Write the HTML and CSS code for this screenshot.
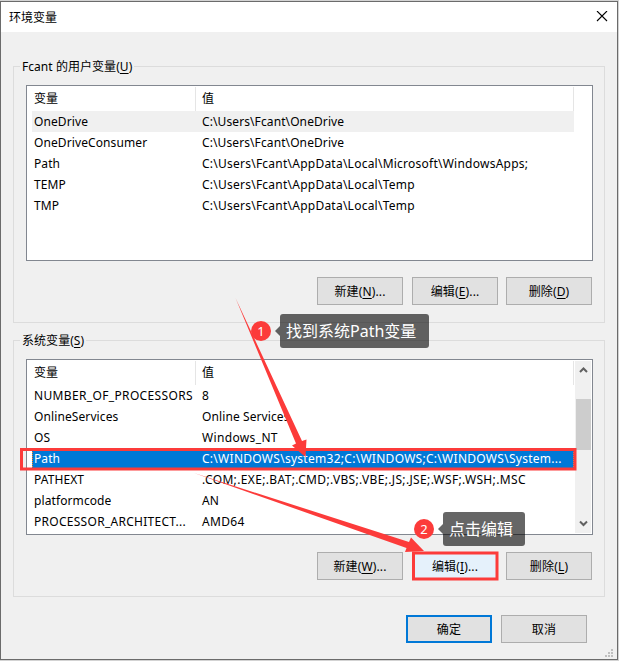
FILE: index.html
```
<!DOCTYPE html>
<html lang="zh-CN">

<head>
  <meta charset="UTF-8" />
  <meta name="viewport" content="width=device-width, initial-scale=1.0" />
  <title>环境变量</title>
  <link rel="stylesheet" href="styles.css">
</head>

<body>
  <div class="window">
    <header class="titlebar">
      <span>环境变量</span>
      <svg class="close" width="12" height="12" viewBox="0 0 12 12">
        <path d="M1 0L11 10M11 0L1 10" />
      </svg>
    </header>

    <main class="content">
      <section class="group user">
        <h2>Fcant 的用户变量(<u>U</u>)</h2>
        <div class="list">
          <div class="rows">
            <div class="row head"><span>变量</span><span>值</span></div>
            <div class="row current"><span>OneDrive</span><span>C:\Users\Fcant\OneDrive</span></div>
            <div class="row"><span>OneDriveConsumer</span><span>C:\Users\Fcant\OneDrive</span></div>
            <div class="row"><span>Path</span><span class="long">C:\Users\Fcant\AppData\Local\Microsoft\WindowsApps;</span></div>
            <div class="row"><span>TEMP</span><span class="long">C:\Users\Fcant\AppData\Local\Temp</span></div>
            <div class="row"><span>TMP</span><span class="long">C:\Users\Fcant\AppData\Local\Temp</span></div>
          </div>
        </div>
        <div class="buttons">
          <button>新建(<u>N</u>)...</button>
          <button>编辑(<u>E</u>)...</button>
          <button>删除(<u>D</u>)</button>
        </div>
      </section>

      <section class="group system">
        <h2>系统变量(<u>S</u>)</h2>
        <div class="list">
          <div class="rows">
            <div class="row head"><span>变量</span><span>值</span></div>
            <div class="row"><span class="caps">NUMBER_OF_PROCESSORS</span><span>8</span></div>
            <div class="row"><span>OnlineServices</span><span>Online Services</span></div>
            <div class="row"><span>OS</span><span class="caps">Windows_NT</span></div>
            <div class="row selected"><span>Path</span><span class="path">C:\WINDOWS\system32;C:\WINDOWS;C:\WINDOWS\System...</span></div>
            <div class="row"><span>PATHEXT</span><span class="caps">.COM;.EXE;.BAT;.CMD;.VBS;.VBE;.JS;.JSE;.WSF;.WSH;.MSC</span></div>
            <div class="row"><span>platformcode</span><span>AN</span></div>
            <div class="row"><span class="path">PROCESSOR_ARCHITECT...</span><span class="caps">AMD64</span></div>
          </div>
          <div class="scrollbar">
            <svg width="9" height="7" viewBox="0 0 9 7"><path d="M1 5L4.500 1.500L8 5" /></svg>
            <div class="thumb"></div>
            <svg width="9" height="7" viewBox="0 0 9 7"><path d="M1 1.500L4.500 5L8 1.500" /></svg>
          </div>
        </div>
        <div class="buttons">
          <button>新建(<u>W</u>)...</button>
          <button class="hover">编辑(<u>I</u>)...</button>
          <button>删除(<u>L</u>)</button>
        </div>
      </section>

      <footer class="actions">
        <button class="default">确定</button>
        <button>取消</button>
      </footer>
    </main>
    <svg class="grip" width="9" height="9" viewBox="0 0 9 9">
      <path d="M6 0h2v2h-2zM3 3h2v2h-2zM6 3h2v2h-2zM0 6h2v2h-2zM3 6h2v2h-2zM6 6h2v2h-2z" />
    </svg>
  </div>

  <!-- annotations -->
  <svg class="arrows" width="619" height="661" viewBox="0 0 619 661">
    <rect x="21.500" y="449.500" width="553.500" height="19.500" />
    <rect x="413.500" y="553" width="83.500" height="26" />
    <path d="M235.500 298L302 441L306.500 439.500L305.500 457L292 445.500L296 443.500Z" />
    <path d="M194 473L409 542L411 537.500L424 551L405 552L406.500 548Z" />
  </svg>
  <div class="badge one">1</div>
  <div class="tip find">找到系统Path变量</div>
  <div class="badge two">2</div>
  <div class="tip edit">点击编辑</div>
</body>

</html>
```
FILE: styles.css
```
* {
  box-sizing: border-box;
}

body {
  margin: 0;
  padding: 1px 10px 1px 0;
  height: 661px;
  overflow: hidden;
  background: #d3d3d3;
  color: #000;
  font-family: "Noto Sans", "Noto Sans CJK SC", sans-serif;
  font-size: 12px;
}

.window {
  position: relative;
  width: 618px;
  height: 659px;
  border: 1px solid #6b6b6b;
  background: #f0f0f0;
}

.titlebar {
  display: flex;
  align-items: center;
  justify-content: space-between;
  height: 30px;
  padding: 0 9px 0 8px;
  background: #fff;
}

.close {
  fill: none;
  stroke: #000;
  stroke-width: 1.1;
}

.content {
  padding: 34px 12px 0;
}

.group {
  height: 257px;
  padding: 18px 11px 0 12px;
  border: 1px solid #dcdcdc;
}

.system {
  margin-top: 17px;
}

h2 {
  width: max-content;
  height: 20px;
  margin: -28px 0 8px -6px;
  padding: 0 2px;
  background: #f0f0f0;
  font-size: 12px;
  font-weight: 400;
  letter-spacing: 0.05px;
  line-height: 20px;
}

u {
  text-underline-offset: 2px;
}

.list {
  display: flex;
  height: 176px;
  padding: 1px;
  border: 1px solid #828790;
  background: #fff;
}

.rows {
  width: 547px;
  padding-left: 4px;
}

.row {
  display: grid;
  grid-template-columns: 164px 378px;
  width: 542px;
  height: 21px;
  letter-spacing: 0.1px;
  line-height: 21px;
  white-space: nowrap;
}

.row span {
  padding-left: 2px;
}

.row span + span {
  padding-left: 6px;
}

.row .long {
  letter-spacing: 0.24px;
}

.row .path {
  letter-spacing: 0.28px;
}

.row .caps {
  letter-spacing: 0.35px;
}

.head {
  height: 24px;
  line-height: 24px;
}

.head span {
  border-right: 1px solid #e5e5e5;
}

.current {
  background: #f0f0f0;
}

.selected {
  background: #0078d7;
  outline: 1px dotted #ff8728;
  outline-offset: -1px;
  color: #fff;
}

.scrollbar {
  display: flex;
  flex-direction: column;
  align-items: center;
  justify-content: space-between;
  width: 16px;
  padding: 6px 0;
  background: #f0f0f0;
}

.scrollbar svg {
  fill: none;
  stroke: #606060;
  stroke-width: 2;
}

.thumb {
  width: 15px;
  height: 51px;
  margin-bottom: 45px;
  background: #cdcdcd;
}

.buttons {
  display: flex;
  justify-content: flex-end;
  gap: 8px;
  padding: 16px 1px 0 0;
}

.system .buttons {
  padding-top: 17px;
}

.buttons button:first-child {
  margin-right: 1px;
}

button {
  width: 86px;
  height: 28px;
  padding: 0;
  border: 1px solid #adadad;
  background: #e1e1e1;
  color: #000;
  font: inherit;
  letter-spacing: 0.15px;
}

.hover {
  border-color: #0078d7;
  background: #e5f1fb;
}

.default {
  border: 2px solid #0078d7;
}

.actions {
  display: flex;
  justify-content: flex-end;
  gap: 9px;
  padding: 18px 18px 0 0;
}

.grip {
  position: absolute;
  right: 3px;
  bottom: 1px;
  fill: #bfbfbf;
}

.arrows {
  position: absolute;
  top: 0;
  left: 0;
  fill: #fc3b3a;
}

.arrows rect {
  fill: none;
  stroke: #fc3b3a;
  stroke-width: 3;
}

.badge {
  position: absolute;
  width: 20px;
  height: 20px;
  border-radius: 50%;
  background: #fc3b3a;
  color: #fff;
  font-size: 13px;
  line-height: 20px;
  text-align: center;
}

.one {
  top: 321px;
  left: 251px;
}

.two {
  top: 519px;
  left: 414px;
}

.tip {
  position: absolute;
  height: 34px;
  padding-left: 6px;
  border-radius: 3px;
  background: rgba(0, 0, 0, 0.6);
  color: #fff;
  font-size: 16px;
  line-height: 34px;
  white-space: nowrap;
}

.tip::before {
  content: "";
  position: absolute;
  top: 12px;
  left: -5px;
  border: 5px solid transparent;
  border-left: 0;
  border-right-color: rgba(0, 0, 0, 0.6);
}

.find {
  top: 314px;
  left: 280px;
  width: 149px;
}

.edit {
  top: 512px;
  left: 443px;
  width: 82px;
}
```
